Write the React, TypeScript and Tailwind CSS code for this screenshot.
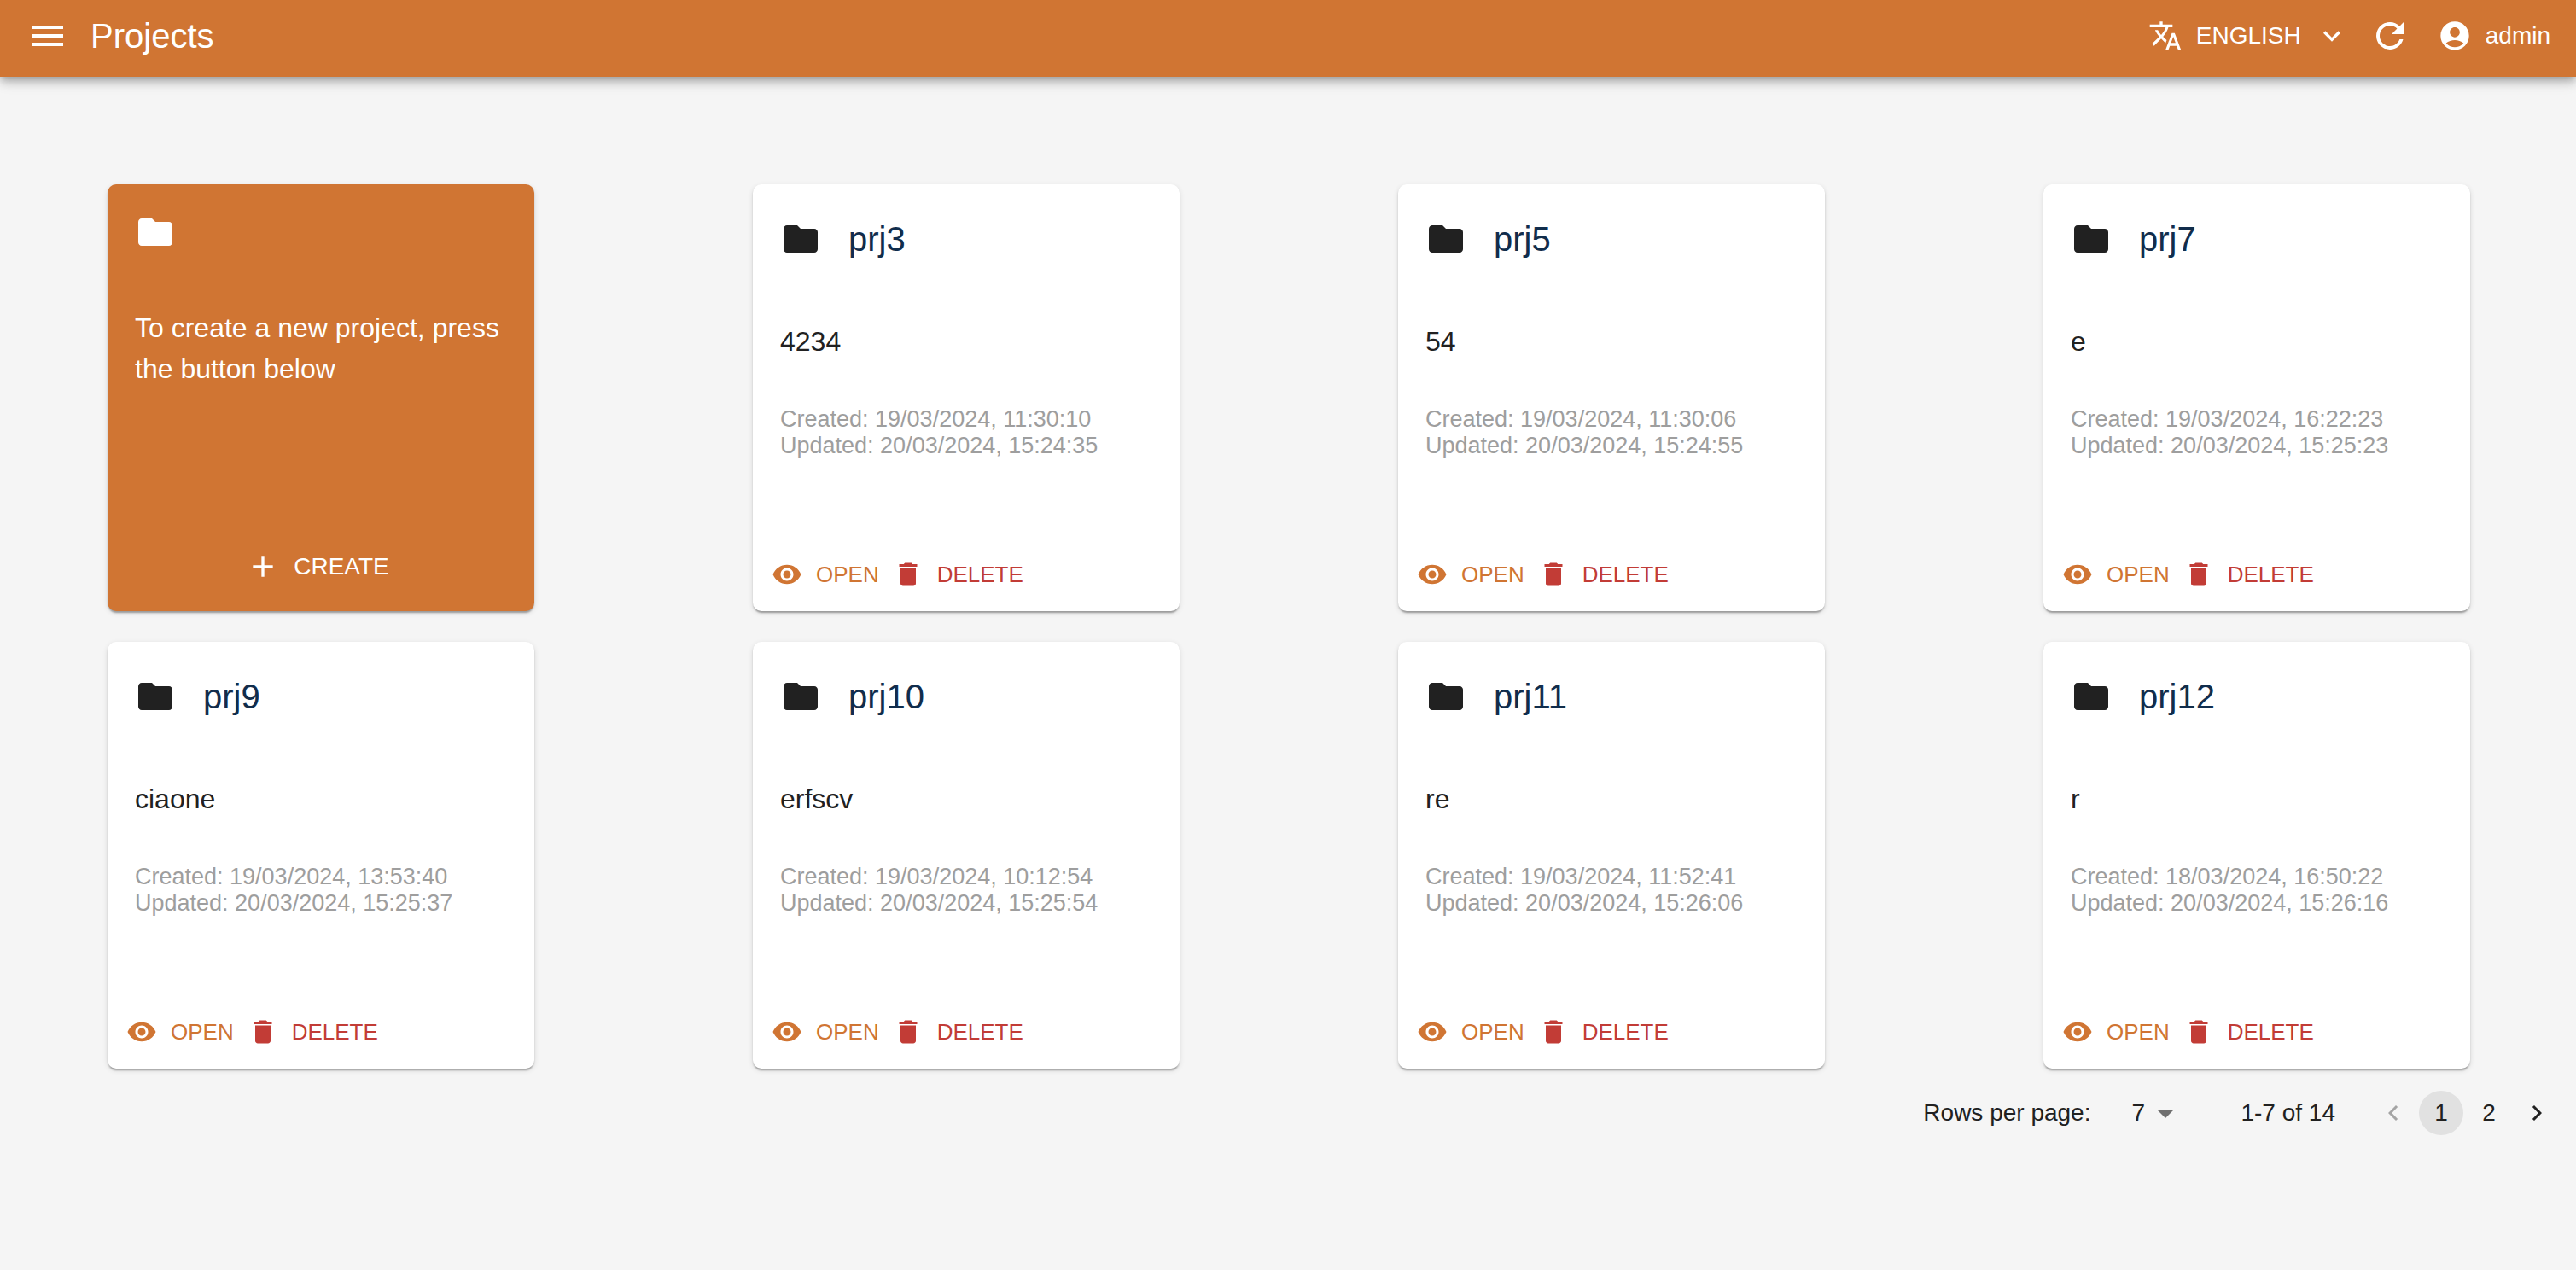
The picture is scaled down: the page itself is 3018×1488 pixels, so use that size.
import React from "react";

type Project = {
  name: string;
  description: string;
  created: string;
  updated: string;
};

const projects: Project[] = [
  { name: "prj3", description: "4234", created: "19/03/2024, 11:30:10", updated: "20/03/2024, 15:24:35" },
  { name: "prj5", description: "54", created: "19/03/2024, 11:30:06", updated: "20/03/2024, 15:24:55" },
  { name: "prj7", description: "e", created: "19/03/2024, 16:22:23", updated: "20/03/2024, 15:25:23" },
  { name: "prj9", description: "ciaone", created: "19/03/2024, 13:53:40", updated: "20/03/2024, 15:25:37" },
  { name: "prj10", description: "erfscv", created: "19/03/2024, 10:12:54", updated: "20/03/2024, 15:25:54" },
  { name: "prj11", description: "re", created: "19/03/2024, 11:52:41", updated: "20/03/2024, 15:26:06" },
  { name: "prj12", description: "r", created: "18/03/2024, 16:50:22", updated: "20/03/2024, 15:26:16" },
];

const icons = {
  menu: "M3 18h18v-2H3v2zm0-5h18v-2H3v2zm0-7v2h18V6H3z",
  translate:
    "m12.87 15.07-2.54-2.51.03-.03c1.74-1.94 2.98-4.17 3.71-6.53H17V4h-7V2H8v2H1v1.99h11.17C11.5 7.92 10.44 9.75 9 11.35 8.07 10.32 7.3 9.19 6.69 8h-2c.73 1.63 1.73 3.17 2.98 4.56l-5.09 5.02L4 19l5-5 3.11 3.11.76-2.04zM18.5 10h-2L12 22h2l1.12-3h4.75L21 22h2l-4.5-12zm-2.62 7 1.62-4.33L19.12 17h-3.24z",
  expand: "M16.59 8.59 12 13.17 7.41 8.59 6 10l6 6 6-6z",
  refresh:
    "M17.65 6.35C16.2 4.9 14.21 4 12 4c-4.42 0-7.99 3.58-7.99 8s3.57 8 7.99 8c3.73 0 6.84-2.55 7.73-6h-2.08c-.82 2.33-3.04 4-5.65 4-3.31 0-6-2.69-6-6s2.69-6 6-6c1.66 0 3.14.69 4.22 1.78L13 11h7V4l-2.35 2.35z",
  account:
    "M12 2C6.48 2 2 6.48 2 12s4.48 10 10 10 10-4.48 10-10S17.52 2 12 2zm0 4c1.93 0 3.5 1.57 3.5 3.5S13.93 13 12 13s-3.5-1.57-3.5-3.5S10.07 6 12 6zm0 14c-2.03 0-4.43-.82-6.14-2.88C7.55 15.8 9.68 15 12 15s4.45.8 6.14 2.12C16.43 19.18 14.03 20 12 20z",
  folder: "M10 4H4c-1.1 0-1.99.9-1.99 2L2 18c0 1.1.9 2 2 2h16c1.1 0 2-.9 2-2V8c0-1.1-.9-2-2-2h-8l-2-2z",
  add: "M19 13h-6v6h-2v-6H5v-2h6V5h2v6h6v2z",
  eye: "M12 4.5C7 4.5 2.73 7.61 1 12c1.73 4.39 6 7.5 11 7.5s9.27-3.11 11-7.5c-1.73-4.39-6-7.5-11-7.5zM12 17c-2.76 0-5-2.24-5-5s2.24-5 5-5 5 2.24 5 5-2.24 5-5 5zm0-8c-1.66 0-3 1.34-3 3s1.34 3 3 3 3-1.34 3-3-1.34-3-3-3z",
  trash: "M6 19c0 1.1.9 2 2 2h8c1.1 0 2-.9 2-2V7H6v12zM19 4h-3.5l-1-1h-5l-1 1H5v2h14V4z",
  dropdown: "m7 10 5 5 5-5z",
  before: "M15.41 7.41 14 6l-6 6 6 6 1.41-1.41L10.83 12z",
  next: "M10 6 8.59 7.41 13.17 12l-4.58 4.59L10 18l6-6z",
};

function Icon({ name, className }: { name: keyof typeof icons; className: string }) {
  return (
    <svg viewBox="0 0 24 24" fill="currentColor" aria-hidden="true" className={`shrink-0 ${className}`}>
      <path d={icons[name]} />
    </svg>
  );
}

const cardShadow =
  "shadow-[0_4px_2px_-2px_rgba(0,0,0,0.2),0_2px_2px_0_rgba(0,0,0,0.14),0_2px_6px_0_rgba(0,0,0,0.12)]";

function TopBar() {
  return (
    <header className="relative flex h-[90px] items-center justify-between bg-[#d07533] pr-[30px] pb-[6px] pl-8 text-white shadow-[0_4px_8px_-2px_rgba(0,0,0,0.2),0_8px_10px_0_rgba(0,0,0,0.14),0_2px_20px_0_rgba(0,0,0,0.12)]">
      <div className="flex items-center gap-[26px]">
        <button type="button" aria-label="Open menu">
          <Icon name="menu" className="size-12" />
        </button>
        <h1 className="text-[40px] leading-[64px]">Projects</h1>
      </div>
      <div className="flex items-center text-[28px] leading-[48px]">
        <button type="button" className="flex items-center gap-4">
          <Icon name="translate" className="size-10" />
          ENGLISH
          <Icon name="expand" className="size-10" />
        </button>
        <button type="button" aria-label="Refresh" className="mr-8 ml-6">
          <Icon name="refresh" className="size-12" />
        </button>
        <button type="button" className="flex items-center gap-4">
          <Icon name="account" className="size-10" />
          admin
        </button>
      </div>
    </header>
  );
}

function CreateCard() {
  return (
    <section className={`flex h-[500px] flex-col rounded-[10px] bg-[#d07533] text-white ${cardShadow}`}>
      <div className="p-8">
        <Icon name="folder" className="size-12" />
      </div>
      <p className="px-8 pt-8 text-[32px] leading-[48px]">To create a new project, press the button below</p>
      <div className="mt-auto flex justify-center pb-7">
        <button type="button" className="flex items-center gap-4 text-[28px] leading-[48px]">
          <Icon name="add" className="-ml-2 size-10" />
          CREATE
        </button>
      </div>
    </section>
  );
}

function ProjectCard({ project }: { project: Project }) {
  return (
    <article className={`flex h-[500px] flex-col rounded-[10px] bg-white text-[#212121] ${cardShadow}`}>
      <div className="flex items-center gap-8 p-8">
        <Icon name="folder" className="size-12" />
        <h2 className="text-[40px] leading-[64px] text-[#112d4c]">{project.name}</h2>
      </div>
      <div className="px-8 pt-8">
        <p className="text-[32px] leading-[48px]">{project.description}</p>
        <p className="mt-[52px] text-[27px] leading-[31px] text-[#9e9e9e]">
          Created: {project.created}
          <br />
          Updated: {project.updated}
        </p>
      </div>
      <div className="mt-auto flex gap-4 px-[22px] pb-5 text-[26px] leading-[46px]">
        <button type="button" className="flex items-center gap-4 text-[#d07533]">
          <Icon name="eye" className="size-9" />
          OPEN
        </button>
        <button type="button" className="flex items-center gap-4 text-[#c23c36]">
          <Icon name="trash" className="size-9" />
          DELETE
        </button>
      </div>
    </article>
  );
}

function Pagination() {
  const item = "flex size-[52px] items-center justify-center rounded-full";
  return (
    <div className="flex items-center justify-end pr-5 text-[28px] leading-[48px] text-[#212121]">
      <label htmlFor="rows" className="mr-12">
        Rows per page:
      </label>
      <div className="relative mr-16">
        <select id="rows" defaultValue="7" className="block h-12 w-16 appearance-none bg-transparent">
          <option>7</option>
          <option>15</option>
          <option>23</option>
        </select>
        <Icon name="dropdown" className="pointer-events-none absolute top-0 right-0 size-12 text-[#707070]" />
      </div>
      <span>1-7 of 14</span>
      <nav aria-label="Pages" className="ml-[42px] flex gap-1">
        <button type="button" disabled aria-label="Previous page" className={item}>
          <Icon name="before" className="size-9 text-[#a4a4a4]" />
        </button>
        <button type="button" aria-current="page" className={`${item} bg-[#e1e1e1]`}>
          1
        </button>
        <button type="button" className={item}>
          2
        </button>
        <button type="button" aria-label="Next page" className={item}>
          <Icon name="next" className="size-9" />
        </button>
      </nav>
    </div>
  );
}

export default function App() {
  return (
    <div className="min-h-screen bg-[#f5f5f5] font-['Liberation_Sans',Arial,sans-serif]">
      <TopBar />
      <main className="pt-[126px]">
        <div className="mb-[26px] grid grid-cols-[repeat(auto-fill,500px)] justify-between gap-x-[100px] gap-y-9 pr-[124px] pl-[126px]">
          <CreateCard />
          {projects.map((p) => (
            <ProjectCard key={p.name} project={p} />
          ))}
        </div>
        <Pagination />
      </main>
    </div>
  );
}
